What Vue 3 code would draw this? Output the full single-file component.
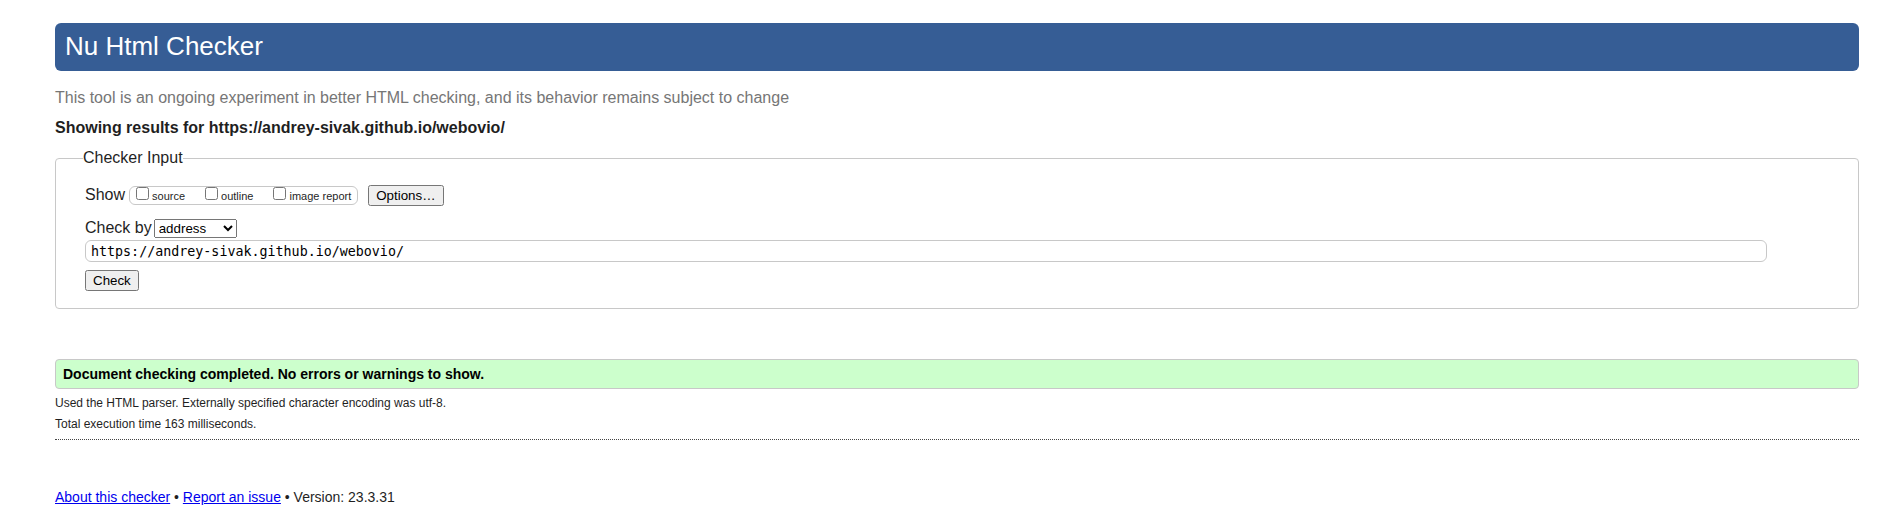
<script setup>
import { ref } from 'vue'

const show = ref([
  { id: 'source', label: 'source', on: false },
  { id: 'outline', label: 'outline', on: false },
  { id: 'imagereport', label: 'image report', on: false },
])
const method = ref('address')
const address = ref('https://andrey-sivak.github.io/webovio/')
</script>

<template>
  <div class="page">
    <header class="banner">
      <h1>Nu Html Checker</h1>
    </header>
    <p class="intro">This tool is an ongoing experiment in better HTML checking, and its behavior remains subject to change</p>
    <h2 class="subject">Showing results for https://andrey-sivak.github.io/webovio/</h2>

    <form @submit.prevent>
      <fieldset class="inputs">
        <legend>Checker Input</legend>
        <div class="row show-row">
          <span>Show</span>
          <div class="checks">
            <label v-for="item in show" :key="item.id" :for="item.id">
              <input :id="item.id" v-model="item.on" type="checkbox" />
              <span>{{ item.label }}</span>
            </label>
          </div>
          <button type="button">Options…</button>
        </div>
        <div class="row by-row">
          <label for="method">Check by</label>
          <select id="method" v-model="method">
            <option value="address">address</option>
            <option value="file">file upload</option>
            <option value="text">text input</option>
          </select>
        </div>
        <input v-model="address" class="address" type="url" aria-label="Address" />
        <button class="check" type="submit">Check</button>
      </fieldset>
    </form>

    <main>
      <p class="success">Document checking completed. No errors or warnings to show.</p>
      <p class="detail">Used the HTML parser. Externally specified character encoding was utf-8.</p>
      <p class="detail">Total execution time 163 milliseconds.</p>
    </main>

    <footer>
      <a href="#about">About this checker</a> • <a href="#issue">Report an issue</a> • Version: 23.3.31
    </footer>
  </div>
</template>

<style>
body {
  margin: 0;
  background: #fff;
}
</style>

<style scoped>
.page {
  padding: 23px 41px 12px 55px;
  color: #1f1f1f;
  font: 16px/20px "Liberation Sans", Arial, sans-serif;
}
h1,
h2,
p {
  margin: 0;
}
.banner {
  padding: 7px 10px 9px;
  border-radius: 6px;
  background: #365d95;
  color: #fff;
}
.banner h1 {
  font-size: 26px;
  font-weight: 400;
  line-height: 32px;
}
.intro {
  margin-top: 17px;
  color: #767676;
}
.subject {
  margin-top: 10px;
  font-size: 16px;
  line-height: 20px;
}
.inputs {
  display: block;
  min-width: 0;
  margin: 10px 0 0;
  padding: 16px 91px 17px 29px;
  border: 1px solid #c8c8c8;
  border-radius: 4px;
}
.inputs legend {
  margin-left: -2px;
  padding: 0;
}
.row {
  display: flex;
  align-items: center;
}
.show-row {
  height: 22px;
}
.checks {
  display: flex;
  gap: 20px;
  margin: 0 10px 0 4px;
  padding: 0 6px;
  border: 1px solid #c8c8c8;
  border-radius: 6px;
  font-size: 11px;
  line-height: 17px;
}
.checks label {
  display: flex;
  gap: 3px;
}
.checks input {
  width: 13px;
  height: 13px;
  margin: 0;
}
.checks span {
  padding-top: 1px;
  line-height: 16px;
}
.by-row {
  gap: 2px;
  margin-top: 12px;
}
.address {
  display: block;
  box-sizing: border-box;
  width: 100%;
  height: 22px;
  margin-top: 2px;
  padding: 0 5px;
  border: 1px solid #c8c8c8;
  border-radius: 6px;
  color: #000;
  font-family: "DejaVu Sans Mono", monospace;
}
button,
select {
  font-family: "Liberation Sans", Arial, sans-serif;
}
.check {
  display: block;
  margin-top: 8px;
}
.success {
  margin-top: 50px;
  padding: 4px 7px;
  border: 1px solid #c8c8c8;
  border-radius: 4px;
  background: #cfc;
  color: #000;
  font-size: 14px;
  font-weight: 700;
}
.success + .detail {
  margin-top: 4px;
}
.detail {
  font-size: 12px;
  line-height: 21px;
}
footer {
  margin-top: 4px;
  padding-top: 47px;
  border-top: 1px dotted #444;
  font-size: 14px;
}
footer a {
  color: #00e;
}
</style>
